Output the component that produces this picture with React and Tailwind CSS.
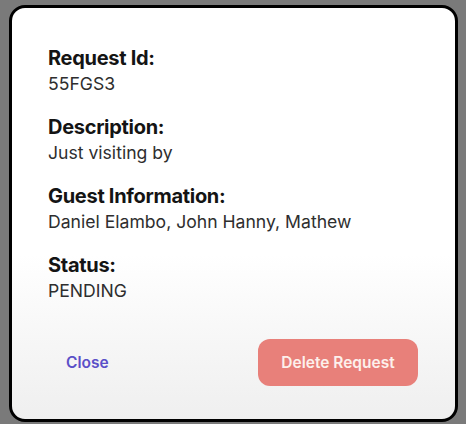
import React from "react";

const details = [
  { label: "Request Id:", value: "55FGS3" },
  { label: "Description:", value: "Just visiting by" },
  { label: "Guest Information:", value: "Daniel Elambo, John Hanny, Mathew" },
  { label: "Status:", value: "PENDING" },
];

function RequestDetailsModal() {
  return (
    <div className="flex h-[417px] w-[449px] flex-col rounded-[16px] border-[3px] border-black bg-gradient-to-b from-white from-60% to-[#efefef] pl-[36px] pr-[37px] pt-[36px]">
      <div className="flex flex-col gap-[17px]">
        {details.map((item) => (
          <div key={item.label} className="flex flex-col">
            <h3 className="text-[20px] font-bold leading-[28px] tracking-[-0.3px] text-[#141414]">
              {item.label}
            </h3>
            <p className="text-[17.6px] leading-[24px] text-[#2e2e2e]">
              {item.value}
            </p>
          </div>
        ))}
      </div>

      <div className="mt-auto mb-[33px] flex items-center justify-between">
        <button
          type="button"
          className="ml-[18px] text-[15.5px] font-semibold text-[#5b50c8]"
        >
          Close
        </button>
        <button
          type="button"
          className="h-[47px] w-[160px] rounded-[12px] bg-[#e8807a] text-[15.5px] font-semibold text-[#fdf0ec]"
        >
          Delete Request
        </button>
      </div>
    </div>
  );
}

export default function App() {
  return (
    <div
      className="flex h-[424px] w-[466px] bg-[#7a7a7a] pl-[9px] pt-[5px]"
      style={{ fontFamily: "Inter, 'Noto Sans', sans-serif" }}
    >
      <RequestDetailsModal />
    </div>
  );
}
